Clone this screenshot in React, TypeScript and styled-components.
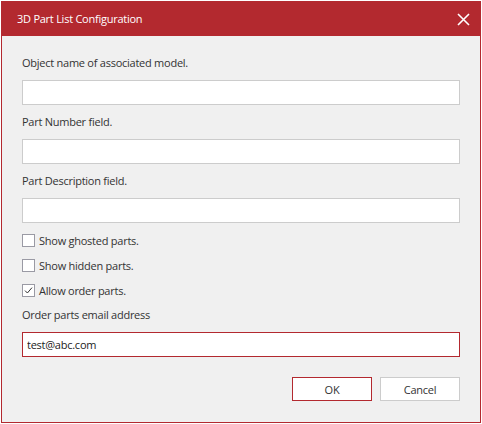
import React, { useState } from "react";
import styled, { createGlobalStyle } from "styled-components";

const GlobalStyle = createGlobalStyle`
  html, body {
    margin: 0;
    padding: 0;
    background: #ffffff;
  }
  body {
    padding: 1px;
    font-family: "Open Sans", "Noto Sans", "Liberation Sans", sans-serif;
  }
`;

const RED = "#b3292f";

const Dialog = styled.div`
  width: 480px;
  box-sizing: border-box;
  border: 1px solid ${RED};
  background: #f0f0f0;
  color: #333333;
  font-size: 11px;
  letter-spacing: -0.25px;
`;

const TitleBar = styled.div`
  height: 34px;
  background: ${RED};
  display: flex;
  align-items: center;
  justify-content: space-between;
  padding: 0 9px 0 15px;
`;

const Title = styled.span`
  color: #ffffff;
  font-size: 11px;
  line-height: 16px;
`;

const CloseButton = styled.button`
  width: 16px;
  height: 16px;
  padding: 0;
  border: 0;
  background: transparent;
  display: flex;
  align-items: center;
  justify-content: center;
  cursor: pointer;
`;

const Body = styled.div`
  display: flex;
  flex-direction: column;
  gap: 9px;
  padding: 19px 20px 21px 20px;
`;

const Label = styled.label`
  display: block;
  line-height: 16px;
`;

const TextInput = styled.input<{ focused?: boolean }>`
  box-sizing: border-box;
  width: 100%;
  height: 25px;
  margin: 0;
  padding: 0 4px;
  border: 1px solid ${({ focused }) => (focused ? RED : "#cccccc")};
  background: #ffffff;
  color: #222222;
  font-family: inherit;
  font-size: 11px;
  letter-spacing: -0.25px;
  outline: none;
`;

const CheckRow = styled.label`
  display: flex;
  align-items: center;
  gap: 4px;
  height: 16px;
  cursor: pointer;
`;

const Box = styled.span`
  box-sizing: border-box;
  width: 13px;
  height: 13px;
  border: 1px solid #9a9aa4;
  background: #ffffff;
  display: flex;
  align-items: center;
  justify-content: center;
`;

const Footer = styled.div`
  display: flex;
  justify-content: flex-end;
  gap: 8px;
  margin-top: 11px;
`;

const Button = styled.button<{ primary?: boolean }>`
  width: 80px;
  height: 24px;
  box-sizing: border-box;
  border: 1px solid ${({ primary }) => (primary ? RED : "#cccccc")};
  background: #ffffff;
  color: #333333;
  font-family: inherit;
  font-size: 11px;
  letter-spacing: -0.25px;
  cursor: pointer;
`;

const Field = ({ label, value, focused }: { label: string; value?: string; focused?: boolean }) => (
  <>
    <Label>{label}</Label>
    <TextInput focused={focused} defaultValue={value} autoFocus={focused} />
  </>
);

const Check = ({ label, checked }: { label: string; checked?: boolean }) => {
  const [on, setOn] = useState(!!checked);
  return (
    <CheckRow onClick={() => setOn(!on)}>
      <Box>
        {on && (
          <svg width="9" height="9" viewBox="0 0 9 9">
            <path d="M1 4.6 L3.4 7 L8 1.6" fill="none" stroke="#333" strokeWidth="1" />
          </svg>
        )}
      </Box>
      {label}
    </CheckRow>
  );
};

const App = () => (
  <>
    <GlobalStyle />
    <Dialog>
      <TitleBar>
        <Title>3D Part List Configuration</Title>
        <CloseButton aria-label="Close">
          <svg width="13" height="13" viewBox="0 0 13 13">
            <path d="M1 1 L12 12 M12 1 L1 12" stroke="#ffffff" strokeWidth="1.6" />
          </svg>
        </CloseButton>
      </TitleBar>
      <Body>
        <Field label="Object name of associated model." />
        <Field label="Part Number field." />
        <Field label="Part Description field." />
        <Check label="Show ghosted parts." />
        <Check label="Show hidden parts." />
        <Check label="Allow order parts." checked />
        <Field label="Order parts email address" value="test@abc.com" focused />
        <Footer>
          <Button primary>OK</Button>
          <Button>Cancel</Button>
        </Footer>
      </Body>
    </Dialog>
  </>
);

export default App;
